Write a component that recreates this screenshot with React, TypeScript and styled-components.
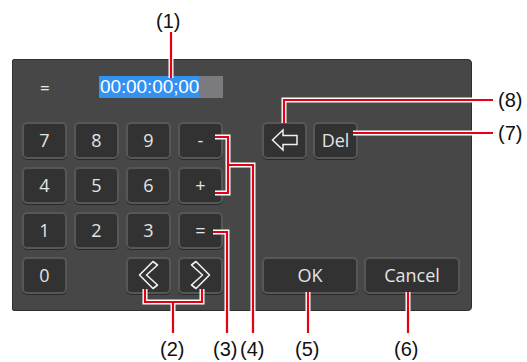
import React from 'react'
import styled, { createGlobalStyle } from 'styled-components'

const GlobalStyle = createGlobalStyle`
  html, body {
    margin: 0;
    padding: 0;
    background: #ffffff;
  }
`

const Page = styled.div`
  position: relative;
  width: 527px;
  height: 362px;
  overflow: hidden;
  box-sizing: border-box;
  padding: 59px 0 0 12px;
  background: #ffffff;
  font-family: 'Open Sans', 'Liberation Sans', sans-serif;
`

const Panel = styled.div`
  width: 460px;
  height: 252px;
  box-sizing: border-box;
  background: #474747;
  border: 1px solid #2e2e2e;
  border-radius: 2px 4px 4px 2px;
  padding: 16px 0 0 9px;
`

const DisplayRow = styled.div`
  display: flex;
  align-items: center;
  height: 22px;
`

const Equals = styled.div`
  width: 77px;
  padding-left: 18px;
  box-sizing: border-box;
  color: #e8e8e8;
  font-size: 17px;
`

const Field = styled.div`
  display: flex;
  height: 22px;
  background: #7b7a7f;
  width: 124px;
`

const Selected = styled.span`
  background: #3391f0;
  color: #ffffff;
  font-family: 'Liberation Sans', Arial, sans-serif;
  font-size: 19px;
  line-height: 22px;
  letter-spacing: -0.1px;
  padding: 0 0 0 1px;
`

const Controls = styled.div`
  display: flex;
  gap: 39px;
  margin-top: 24px;
`

const Keypad = styled.div`
  display: grid;
  grid-template-columns: repeat(4, 45px);
  grid-auto-rows: 38px;
  gap: 7px;
`

const SidePad = styled.div`
  display: grid;
  grid-template-columns: repeat(4, 45px);
  grid-template-rows: repeat(4, 38px);
  column-gap: 6px;
  row-gap: 7px;
`

const Key = styled.button<{ $col?: string; $row?: string }>`
  grid-column: ${(p) => p.$col ?? 'auto'};
  grid-row: ${(p) => p.$row ?? 'auto'};
  display: flex;
  align-items: center;
  justify-content: center;
  margin: 0;
  padding: 0 0 1px;
  height: 37px;
  box-sizing: border-box;
  background: #323232;
  border: 2px solid #575757;
  border-radius: 5px;
  box-shadow: 0 1px 0 #2a2a2a;
  color: #e4e4e4;
  font-family: 'Open Sans', 'Liberation Sans', sans-serif;
  font-size: 18px;
  line-height: 1;
`

const Overlay = styled.svg`
  position: absolute;
  left: 0;
  top: 0;
  pointer-events: none;
`

const Callout = styled.div<{ $x: number; $y: number }>`
  position: absolute;
  left: ${(p) => p.$x}px;
  top: ${(p) => p.$y}px;
  color: #111;
  font-family: 'Liberation Sans', Arial, sans-serif;
  font-size: 20px;
  line-height: 22px;
  white-space: nowrap;
`

const lines = [
  'M171 32 V78',
  'M284 123 V100 H493',
  'M353 133 H493',
  'M215 137 H228 V193 H215',
  'M228 165 H253 V333',
  'M213 232 H227 V333',
  'M145 289 V302 H202 V289',
  'M173 302 V333',
  'M308 292 V333',
  'M408 292 V333',
]

const labels = [
  { t: '(1)', x: 156, y: 10 },
  { t: '(8)', x: 498, y: 89 },
  { t: '(7)', x: 498, y: 122 },
  { t: '(2)', x: 160, y: 338 },
  { t: '(3)', x: 213, y: 338 },
  { t: '(4)', x: 240, y: 338 },
  { t: '(5)', x: 295, y: 338 },
  { t: '(6)', x: 394, y: 338 },
]

function Chevron({ dir }: { dir: 'left' | 'right' }) {
  return (
    <svg width="21" height="30" viewBox="0 0 21 30">
      <path
        d={
          dir === 'left'
            ? 'M15 1.5 L19.5 5 L8.5 15 L19.5 25 L15 28.5 L1.5 15 Z'
            : 'M6 1.5 L1.5 5 L12.5 15 L1.5 25 L6 28.5 L19.5 15 Z'
        }
        fill="none"
        stroke="#f0f0f0"
        strokeWidth="1.6"
        strokeLinejoin="round"
      />
    </svg>
  )
}

function BackArrow() {
  return (
    <svg width="28" height="24" viewBox="0 0 28 24">
      <path
        d="M1.5 12 L12 2 L12 7.5 L26 7.5 L26 16.5 L12 16.5 L12 22 Z"
        fill="none"
        stroke="#f0f0f0"
        strokeWidth="1.5"
        strokeLinejoin="miter"
      />
    </svg>
  )
}

export default function App() {
  return (
    <Page>
      <GlobalStyle />
      <Panel>
        <DisplayRow>
          <Equals>=</Equals>
          <Field>
            <Selected>00:00:00;00</Selected>
          </Field>
        </DisplayRow>
        <Controls>
          <Keypad>
            <Key>7</Key>
            <Key>8</Key>
            <Key>9</Key>
            <Key>-</Key>
            <Key>4</Key>
            <Key>5</Key>
            <Key>6</Key>
            <Key>+</Key>
            <Key>1</Key>
            <Key>2</Key>
            <Key>3</Key>
            <Key>=</Key>
            <Key>0</Key>
            <Key $col="3">
              <Chevron dir="left" />
            </Key>
            <Key $col="4">
              <Chevron dir="right" />
            </Key>
          </Keypad>
          <SidePad>
            <Key $col="1" $row="1">
              <BackArrow />
            </Key>
            <Key $col="2" $row="1">Del</Key>
            <Key $col="1 / 3" $row="4">OK</Key>
            <Key $col="3 / 5" $row="4">Cancel</Key>
          </SidePad>
        </Controls>
      </Panel>
      <Overlay width="527" height="362" viewBox="0 0 527 362">
        {lines.map((d, i) => (
          <path key={'w' + i} d={d} fill="none" stroke="#ffffff" strokeWidth="5" />
        ))}
        {lines.map((d, i) => (
          <path key={'r' + i} d={d} fill="none" stroke="#e60012" strokeWidth="2.2" />
        ))}
      </Overlay>
      {labels.map((l) => (
        <Callout key={l.t} $x={l.x} $y={l.y}>
          {l.t}
        </Callout>
      ))}
    </Page>
  )
}
